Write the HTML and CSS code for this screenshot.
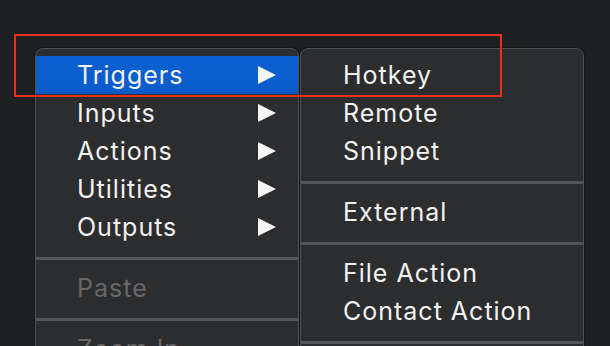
FILE: index.html
```html
<!DOCTYPE html>
<html>
<head>
<meta charset="utf-8">
<link rel="stylesheet" href="styles.css">
</head>
<body>
<div class="stage">
  <div class="menu main-menu">
    <div class="item active"><span class="label">Triggers</span><span class="arrow"></span></div>
    <div class="item"><span class="label">Inputs</span><span class="arrow"></span></div>
    <div class="item"><span class="label">Actions</span><span class="arrow"></span></div>
    <div class="item"><span class="label">Utilities</span><span class="arrow"></span></div>
    <div class="item"><span class="label">Outputs</span><span class="arrow"></span></div>
    <div class="sep"></div>
    <div class="item disabled"><span class="label">Paste</span></div>
    <div class="sep"></div>
    <div class="item disabled"><span class="label">Zoom In</span></div>
  </div>
  <div class="menu sub-menu">
    <div class="item"><span class="label">Hotkey</span></div>
    <div class="item"><span class="label">Remote</span></div>
    <div class="item"><span class="label">Snippet</span></div>
    <div class="sep"></div>
    <div class="item"><span class="label">External</span></div>
    <div class="sep"></div>
    <div class="item"><span class="label">File Action</span></div>
    <div class="item"><span class="label">Contact Action</span></div>
    <div class="sep"></div>
  </div>
  <div class="callout"></div>
</div>
</body>
</html>
```
FILE: styles.css
```css
* { box-sizing: border-box; }
html, body {
  margin: 0;
  padding: 0;
  width: 610px;
  height: 346px;
  overflow: hidden;
  background: #1e1f21;
}
.stage {
  position: relative;
  width: 610px;
  height: 346px;
  overflow: hidden;
  font-family: Inter, "Liberation Sans", sans-serif;
  font-size: 25px;
  letter-spacing: 1px;
  color: #f2f2f2;
}
.menu {
  position: absolute;
  top: 48px;
  height: 360px;
  background: #2c2d2f;
  border: 1px solid #505153;
  border-radius: 8px;
  box-shadow: 0 0 0 1px #151617;
  padding-top: 7px;
  display: flex;
  flex-direction: column;
}
.main-menu {
  left: 35px;
  width: 264px;
}
.sub-menu {
  left: 300px;
  width: 284px;
}
.item {
  height: 38px;
  flex: none;
  display: flex;
  align-items: center;
  justify-content: space-between;
  padding-left: 41px;
  padding-right: 22px;
}
.sub-menu .item { padding-left: 42px; }
.item.active {
  background: linear-gradient(#0b61d2, #0a5bc9);
}
.item.disabled { color: #666769; }
.label { line-height: 1; }
.arrow {
  width: 0;
  height: 0;
  border-top: 9px solid transparent;
  border-bottom: 9px solid transparent;
  border-left: 18px solid #f6f6f6;
}
.sep {
  flex: none;
  height: 3px;
  margin: 11px -1px 9px;
  background: #545557;
}
.callout {
  position: absolute;
  left: 14px;
  top: 34px;
  width: 488px;
  height: 63px;
  border: 2px solid #e5301c;
}
```
